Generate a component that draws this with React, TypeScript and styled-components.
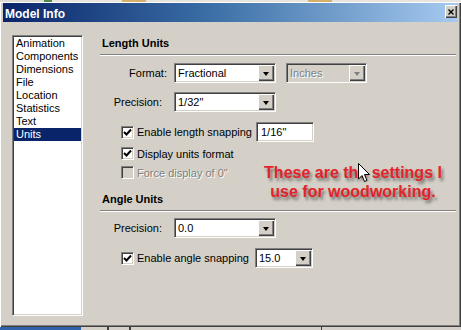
import React from 'react';
import styled, { createGlobalStyle } from 'styled-components';

const Global = createGlobalStyle`
  html, body { margin: 0; padding: 0; background: #d4d0c8; }
  body { font-family: "Liberation Sans", Arial, sans-serif; font-size: 11px; color: #000; }
  * { box-sizing: border-box; }
`;

const Page = styled.div`
  position: relative;
  width: 461px;
  height: 330px;
  display: flex;
  flex-direction: column;
  overflow: hidden;
  background: #d4d0c8;
`;

const Strip = styled.div<{ $h: number }>`
  height: ${p => p.$h}px;
  display: flex;
  flex-shrink: 0;
`;

const StripBit = styled.div<{ $w?: number; $c: string }>`
  ${p => (p.$w ? `width: ${p.$w}px;` : 'flex: 1;')}
  background: ${p => p.$c};
`;

const Window = styled.div`
  height: 325px;
  flex-shrink: 0;
  display: flex;
  flex-direction: column;
  padding: 1px 3px 2px 3px;
  background: #d4d0c8;
  box-shadow: inset 1px 1px #ffffff, inset -1px -1px #404040, inset -2px -2px #808080;
`;

const TitleBar = styled.div`
  height: 19px;
  display: flex;
  align-items: flex-start;
  justify-content: space-between;
  padding: 0 1px 0 2px;
  background: linear-gradient(to right, #0a246a 0%, #3a6ea5 45%, #a6caf0 100%);
`;

const Title = styled.span`
  color: #fff;
  font-weight: bold;
  font-size: 12px;
  line-height: 12px;
  margin-top: 5px;
`;

const CloseButton = styled.div`
  width: 12px;
  height: 13px;
  margin-top: 2px;
  display: flex;
  align-items: center;
  justify-content: center;
  background: #d4d0c8;
  box-shadow: inset 1px 1px #ffffff, inset -1px -1px #404040, inset -2px -2px #808080;
`;

const Client = styled.div`
  flex: 1;
  display: flex;
  padding: 13px 2px 0 9px;
`;

const ListBox = styled.div`
  width: 71px;
  height: 281px;
  background: #fff;
  border: 1px solid;
  border-color: #808080 #ffffff #ffffff #808080;
  box-shadow: inset 1px 1px #404040, inset -1px -1px #d4d0c8;
  padding: 1px;
  display: flex;
  flex-direction: column;
`;

const ListItem = styled.div<{ $selected?: boolean }>`
  height: 13px;
  line-height: 13px;
  padding-left: 2px;
  white-space: nowrap;
  background: ${p => (p.$selected ? '#0a246a' : 'transparent')};
  color: ${p => (p.$selected ? '#fff' : '#000')};
`;

const Panel = styled.div`
  flex: 1;
  margin-left: 17px;
  display: flex;
  flex-direction: column;
`;

const SectionTitle = styled.div<{ $mt: number }>`
  margin-top: ${p => p.$mt}px;
  padding-left: 2px;
  height: 14px;
  line-height: 14px;
  font-weight: bold;
`;

const Separator = styled.div`
  margin-top: 4px;
  height: 2px;
  border-top: 1px solid #808080;
  border-bottom: 1px solid #ffffff;
`;

const FormRow = styled.div<{ $mt: number }>`
  margin-top: ${p => p.$mt}px;
  height: 20px;
  display: flex;
  align-items: center;
`;

const FieldLabel = styled.div<{ $pr: number }>`
  width: 74px;
  text-align: right;
  padding-right: ${p => p.$pr}px;
  white-space: nowrap;
`;

const Combo = styled.div<{ $w: number; $disabled?: boolean; $ml?: number }>`
  width: ${p => p.$w}px;
  height: 20px;
  margin-left: ${p => p.$ml ?? 0}px;
  display: flex;
  border: 1px solid;
  border-color: #808080 #ffffff #ffffff #808080;
  box-shadow: inset 1px 1px #404040, inset -1px -1px #d4d0c8;
  padding: 1px;
  background: ${p => (p.$disabled ? '#d4d0c8' : '#fff')};
`;

const ComboText = styled.div<{ $disabled?: boolean }>`
  flex: 1;
  padding-left: 2px;
  line-height: 16px;
  white-space: nowrap;
  overflow: hidden;
  color: ${p => (p.$disabled ? '#808080' : '#000')};
  text-shadow: ${p => (p.$disabled ? '1px 1px #ffffff' : 'none')};
`;

const ComboButton = styled.div`
  width: 16px;
  height: 16px;
  display: flex;
  align-items: center;
  justify-content: center;
  background: #d4d0c8;
  box-shadow: inset 1px 1px #ffffff, inset -1px -1px #404040, inset -2px -2px #808080;
`;

const Arrow = styled.div<{ $disabled?: boolean }>`
  width: 0;
  height: 0;
  margin-top: 1px;
  border-left: 3.5px solid transparent;
  border-right: 3.5px solid transparent;
  border-top: 4px solid ${p => (p.$disabled ? '#808080' : '#000')};
`;

const CheckRow = styled.div<{ $mt: number; $h: number }>`
  margin-top: ${p => p.$mt}px;
  height: ${p => p.$h}px;
  padding-left: 21px;
  display: flex;
  align-items: center;
`;

const CheckBox = styled.div<{ $disabled?: boolean }>`
  width: 13px;
  height: 13px;
  flex-shrink: 0;
  display: flex;
  align-items: center;
  justify-content: center;
  border: 1px solid;
  border-color: #808080 #ffffff #ffffff #808080;
  box-shadow: inset 1px 1px #404040, inset -1px -1px #d4d0c8;
  background: ${p => (p.$disabled ? '#d4d0c8' : '#fff')};
`;

const CheckText = styled.div<{ $w?: number; $disabled?: boolean }>`
  margin-left: 3px;
  ${p => (p.$w ? `width: ${p.$w}px;` : '')}
  white-space: nowrap;
  color: ${p => (p.$disabled ? '#808080' : '#000')};
  text-shadow: ${p => (p.$disabled ? '1px 1px #ffffff' : 'none')};
`;

const TextInput = styled.div<{ $w: number }>`
  width: ${p => p.$w}px;
  height: 20px;
  border: 1px solid;
  border-color: #808080 #ffffff #ffffff #808080;
  box-shadow: inset 1px 1px #404040, inset -1px -1px #d4d0c8;
  background: #fff;
  padding: 1px 0 0 4px;
  line-height: 16px;
`;

const Annotation = styled.div`
  position: absolute;
  left: 258px;
  top: 163px;
  width: 190px;
  text-align: center;
  color: #e3232b;
  font-weight: bold;
  font-size: 16px;
  line-height: 19px;
  text-shadow: 2px 3px 3px rgba(0, 0, 0, 0.45);
`;

const Cursor = styled.svg`
  position: absolute;
  left: 358px;
  top: 163px;
`;

const DropDown: React.FC<{ w: number; text: string; disabled?: boolean; ml?: number }> = ({ w, text, disabled, ml }) => (
  <Combo $w={w} $disabled={disabled} $ml={ml}>
    <ComboText $disabled={disabled}>{text}</ComboText>
    <ComboButton>
      <Arrow $disabled={disabled} />
    </ComboButton>
  </Combo>
);

const Check: React.FC<{ checked?: boolean; disabled?: boolean }> = ({ checked, disabled }) => (
  <CheckBox $disabled={disabled}>
    {checked && (
      <svg width="9" height="9" viewBox="0 0 9 9">
        <polyline points="1,4 3.5,6.5 8,1.5" fill="none" stroke="#000" strokeWidth="2" />
      </svg>
    )}
  </CheckBox>
);

const items = ['Animation', 'Components', 'Dimensions', 'File', 'Location', 'Statistics', 'Text', 'Units'];

export default function App() {
  return (
    <Page>
      <Global />
      <Strip $h={2}>
        <StripBit $w={44} $c="#dcdad2" />
        <StripBit $w={8} $c="#4f8a4a" />
        <StripBit $w={70} $c="#e8e6de" />
        <StripBit $w={24} $c="#d6b06a" />
        <StripBit $w={162} $c="#e6e4dc" />
        <StripBit $w={24} $c="#d6b06a" />
        <StripBit $c="#e6e4dc" />
      </Strip>
      <Window>
        <TitleBar>
          <Title>Model Info</Title>
          <CloseButton>
            <svg width="6" height="6" viewBox="0 0 6 6">
              <path d="M0.5 0.5 L5.5 5.5 M5.5 0.5 L0.5 5.5" stroke="#000" strokeWidth="1.4" />
            </svg>
          </CloseButton>
        </TitleBar>
        <Client>
          <ListBox>
            {items.map(i => (
              <ListItem key={i} $selected={i === 'Units'}>
                {i}
              </ListItem>
            ))}
          </ListBox>
          <Panel>
            <SectionTitle $mt={1}>Length Units</SectionTitle>
            <Separator />
            <FormRow $mt={7}>
              <FieldLabel $pr={7}>Format:</FieldLabel>
              <DropDown w={102} text="Fractional" />
              <DropDown w={81} text="Inches" disabled ml={10} />
            </FormRow>
            <FormRow $mt={9}>
              <FieldLabel $pr={12}>Precision:</FieldLabel>
              <DropDown w={102} text={'1/32"'} />
            </FormRow>
            <CheckRow $mt={10} $h={20}>
              <Check checked />
              <CheckText $w={119}>Enable length snapping</CheckText>
              <TextInput $w={58}>1/16"</TextInput>
            </CheckRow>
            <CheckRow $mt={5} $h={13}>
              <Check checked />
              <CheckText>Display units format</CheckText>
            </CheckRow>
            <CheckRow $mt={6} $h={13}>
              <Check disabled />
              <CheckText $disabled>Force display of 0"</CheckText>
            </CheckRow>
            <SectionTitle $mt={13}>Angle Units</SectionTitle>
            <Separator />
            <FormRow $mt={6}>
              <FieldLabel $pr={12}>Precision:</FieldLabel>
              <DropDown w={102} text="0.0" />
            </FormRow>
            <CheckRow $mt={10} $h={20}>
              <Check checked />
              <CheckText $w={118}>Enable angle snapping</CheckText>
              <DropDown w={58} text="15.0" />
            </CheckRow>
          </Panel>
        </Client>
      </Window>
      <Strip $h={3}>
        <StripBit $w={81} $c="#2f62a8" />
        <StripBit $w={26} $c="#d4d0c8" />
        <StripBit $w={2} $c="#404040" />
        <StripBit $w={20} $c="#d4d0c8" />
        <StripBit $w={2} $c="#404040" />
        <StripBit $w={190} $c="#d4d0c8" />
        <StripBit $w={1} $c="#404040" />
        <StripBit $c="#d4d0c8" />
      </Strip>
      <Annotation>
        These are the settings I
        <br />
        use for woodworking.
      </Annotation>
      <Cursor width="13" height="20" viewBox="0 0 13 20">
        <path d="M0.5 0.5 L0.5 16 L4 12.5 L6.5 18.5 L9 17.5 L6.5 11.5 L11.5 11.5 Z" fill="#fff" stroke="#000" strokeWidth="1" />
      </Cursor>
    </Page>
  );
}
